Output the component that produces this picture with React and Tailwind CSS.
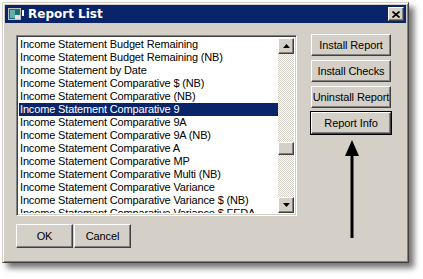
import React from "react";

const rows = [
  "Income Statement Budget Remaining",
  "Income Statement Budget Remaining (NB)",
  "Income Statement by Date",
  "Income Statement Comparative $ (NB)",
  "Income Statement Comparative (NB)",
  "Income Statement Comparative 9",
  "Income Statement Comparative 9A",
  "Income Statement Comparative 9A (NB)",
  "Income Statement Comparative A",
  "Income Statement Comparative MP",
  "Income Statement Comparative Multi (NB)",
  "Income Statement Comparative Variance",
  "Income Statement Comparative Variance $ (NB)",
  "Income Statement Comparative Variance $ FEDA",
];

// classic raised 3D button edges
const raised =
  "border border-t-white border-l-white border-r-[#404040] border-b-[#404040] shadow-[inset_-1px_-1px_0_#808080,inset_1px_1px_0_#d4d0c8]";

function Btn({ children, className = "", focused = false }) {
  return (
    <div className={`${focused ? "outline outline-1 outline-black" : ""} ${className}`}>
      <div className={`h-full w-full bg-[#d4d0c8] ${raised} flex items-center justify-center text-[11px] text-black whitespace-nowrap tracking-[-0.1px]`}>
        {children}
      </div>
    </div>
  );
}

function ScrollArrow({ up }) {
  return (
    <div className={`w-4 h-4 bg-[#d4d0c8] ${raised} flex items-center justify-center`}>
      <svg width="7" height="4" viewBox="0 0 7 4">
        {up ? <path d="M3.5 0 L7 4 L0 4 Z" fill="#000" /> : <path d="M0 0 L7 0 L3.5 4 Z" fill="#000" />}
      </svg>
    </div>
  );
}

export default function App() {
  return (
    <div className="relative w-[423px] h-[279px] bg-white overflow-hidden" style={{ fontFamily: '"Liberation Sans", Arial, sans-serif' }}>
      {/* window frame */}
      <div className="ml-[2px] mt-[2px] w-[407px] h-[261px] bg-[#d4d0c8] border border-t-[#d4d0c8] border-l-[#d4d0c8] border-r-[#404040] border-b-[#404040] shadow-[inset_1px_1px_0_#fff,inset_-1px_-1px_0_#808080,5px_5px_6px_rgba(0,0,0,0.55)] p-[2px]">
        {/* title bar */}
        <div className="h-[18px] bg-[#0a246a] flex items-center pl-[3px] pr-[2px]">
          <svg width="16" height="14" viewBox="0 0 16 14" className="shrink-0">
            <rect x="0" y="1" width="13" height="12" fill="#c0c0c0" />
            <rect x="1" y="2" width="11" height="10" fill="#1d6f73" />
            <rect x="2" y="3" width="5" height="8" fill="#5fb0a8" />
            <rect x="7" y="8" width="5" height="4" fill="#e0e0e0" />
            <rect x="14" y="3" width="2" height="6" fill="#fff" />
          </svg>
          <span className="ml-[4px] text-white font-bold text-[12px] leading-none" style={{ fontFamily: '"DejaVu Sans", Verdana, sans-serif' }}>
            Report List
          </span>
          <div className={`ml-auto w-4 h-[14px] bg-[#d4d0c8] ${raised} flex items-center justify-center`}>
            <svg width="8" height="7" viewBox="0 0 8 7">
              <path d="M0.5 0.5 L7.5 6.5 M7.5 0.5 L0.5 6.5" stroke="#000" strokeWidth="1.6" />
            </svg>
          </div>
        </div>

        {/* body */}
        <div className="flex pt-[12px] pl-[11px]">
          <div className="flex flex-col">
            {/* listbox */}
            <div className="w-[281px] h-[181px] bg-white border border-t-[#808080] border-l-[#808080] border-r-white border-b-white shadow-[inset_1px_1px_0_#404040,inset_-1px_-1px_0_#d4d0c8] p-[2px] flex">
              <div className="flex-1 overflow-hidden">
                {rows.map((r, i) => (
                  <div
                    key={r}
                    className={`h-[13px] leading-[13px] pl-[1px] text-[11px] whitespace-nowrap tracking-[-0.15px] ${i === 5 ? "bg-[#0a246a] text-white" : "text-black"}`}
                  >
                    {r}
                  </div>
                ))}
              </div>
              <div className="w-4 flex flex-col bg-[repeating-conic-gradient(#ffffff_0_25%,#d4d0c8_0_50%)] bg-[length:2px_2px]">
                <ScrollArrow up />
                <div className="h-[88px]" />
                <div className={`h-[13px] w-4 bg-[#d4d0c8] ${raised}`} />
                <div className="flex-1" />
                <ScrollArrow />
              </div>
            </div>

            {/* OK / Cancel */}
            <div className="flex gap-[1px] mt-[8px]">
              <Btn className="w-[57px] h-[24px]">OK</Btn>
              <Btn className="w-[57px] h-[24px]">Cancel</Btn>
            </div>
          </div>

          {/* right buttons */}
          <div className="ml-[14px] flex flex-col gap-[4px] -mt-[1px]">
            <Btn className="w-[80px] h-[22px]">Install Report</Btn>
            <Btn className="w-[80px] h-[22px]">Install Checks</Btn>
            <Btn className="w-[80px] h-[22px]">Uninstall Report</Btn>
            <Btn className="w-[80px] h-[22px]" focused>Report Info</Btn>
          </div>
        </div>
      </div>

      {/* annotation arrow */}
      <svg className="absolute left-[344px] top-[138px]" width="16" height="102" viewBox="0 0 16 102">
        <path d="M8 2 L15 18 L1 18 Z" fill="#000" />
        <rect x="6.5" y="16" width="3" height="84" fill="#000" />
      </svg>
    </div>
  );
}
